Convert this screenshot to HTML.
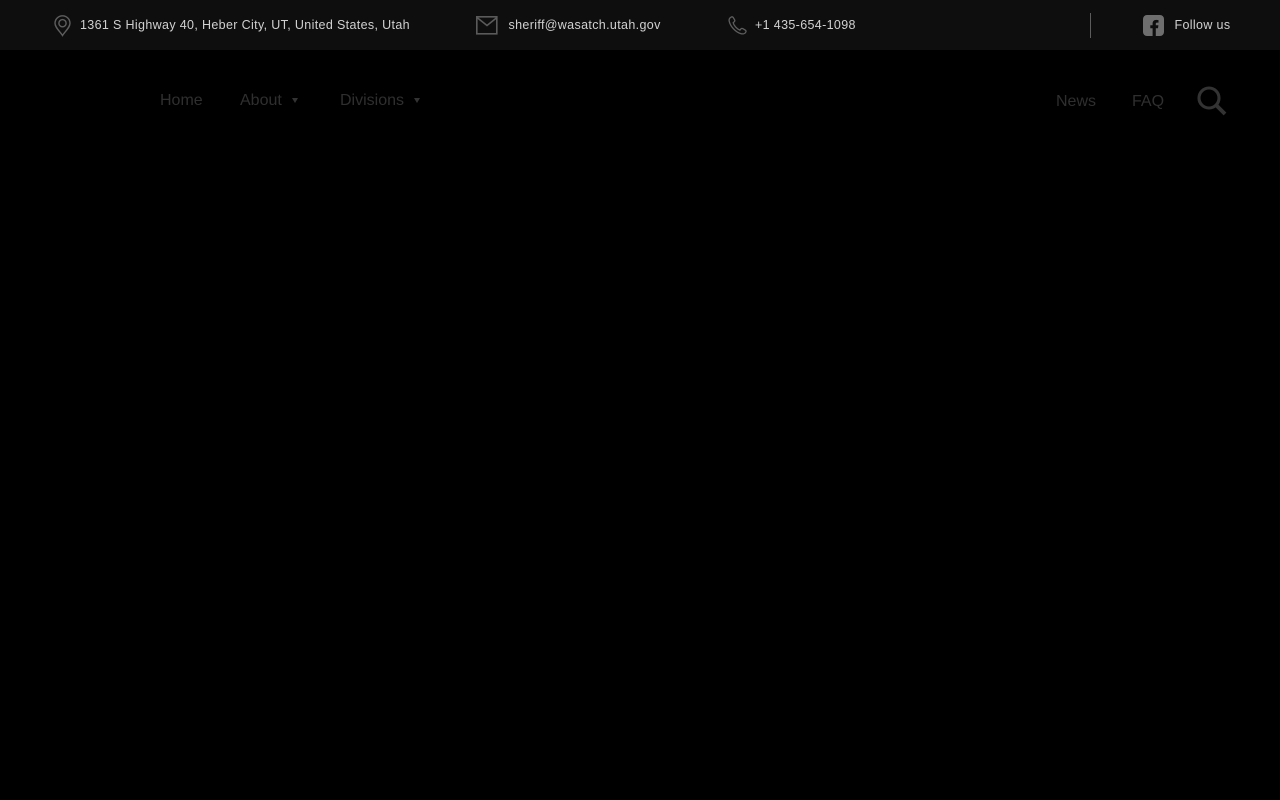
<!DOCTYPE html>
<html lang="en">
<head>
<meta charset="utf-8">
<title>Wasatch County Sheriff</title>
<style>
html,body{margin:0;padding:0;width:1280px;height:800px;background:#000;overflow:hidden;font-family:"Liberation Sans",sans-serif}
#top{position:absolute;left:0;top:0;width:1280px;height:50px;background:#0e0e0e}
.t{position:absolute;top:17px;font-size:12.5px;line-height:16px;color:#d0d0d0;letter-spacing:.35px;white-space:nowrap}
.n{position:absolute;font-size:16px;line-height:20px;color:#2f2f2f;white-space:nowrap;letter-spacing:0}
svg{position:absolute;overflow:visible}
.c{position:absolute;width:0;height:0;border-left:3.5px solid transparent;border-right:3.5px solid transparent;border-top:5px solid #333;top:98px}
</style>
</head>
<body>
<div id="top">
<svg style="left:54px;top:15px" width="17" height="22" viewBox="0 0 17 22" fill="none" stroke="#5e5e5e" stroke-width="1.4"><path d="M8.500 20.500C6 16.500 1 12.500 1 8.300A7.500 7.500 0 0 1 16 8.300C16 12.500 11 16.500 8.500 20.500Z"/><circle cx="8.500" cy="8.200" r="3.600"/></svg>
<div class="t" style="left:80px">1361 S Highway 40, Heber City, UT, United States, Utah</div>
<svg style="left:476px;top:16px" width="22" height="19" viewBox="0 0 22 19" fill="none" stroke="#5a5a5a" stroke-width="1.6"><rect x=".8" y=".8" width="20" height="17"/><path d="M1 1.500L11 9.500L21 1.500"/></svg>
<div class="t" style="left:508.500px">sheriff@wasatch.utah.gov</div>
<svg style="left:728px;top:16px" width="19" height="19" viewBox="0 0 19 19" fill="none" stroke="#5e5e5e" stroke-width="1.300"><path d="M3 1.200C1.500 2 .8 3.300 1.200 5.200C2.400 10.500 7.500 16 12.800 17.600C15 18.300 17.200 17.600 18 15.700C18.200 15 17.800 14.500 17.200 14.100L14.700 12.600C14 12.200 13.400 12.300 12.900 12.900L11.900 14.100C9 13.200 5.800 9.500 5.200 6.700L6.300 5.700C6.900 5.100 7 4.500 6.600 3.800L5.200 1.500C4.700 .8 3.800 .7 3 1.200Z"/></svg>
<div class="t" style="left:755px">+1 435-654-1098</div>
<div style="position:absolute;left:1090px;top:13px;width:1px;height:25px;background:#5c5c5c"></div>
<svg style="left:1143px;top:15px" width="21" height="21" viewBox="0 0 21 21"><path fill="#6e6e6e" d="M4 0H17A4 4 0 0 1 21 4V17A4 4 0 0 1 17 21H12.800V13.200H15L15.400 10.300H12.800V8.800C12.800 8 13.200 7.600 14 7.600H15.500V5.100C14.800 5 14.100 4.900 13.300 4.900C11 4.900 9.600 6.300 9.600 8.500V10.300H7.300V13.200H9.600V21H4A4 4 0 0 1 0 17V4A4 4 0 0 1 4 0Z"/></svg>
<div class="t" style="left:1174.500px">Follow us</div>
</div>
<div class="n" style="left:160px;top:91px">Home</div>
<div class="n" style="left:240px;top:91px">About</div>
<div class="c" style="left:291.500px"></div>
<div class="n" style="left:340px;top:91px">Divisions</div>
<div class="c" style="left:413.500px"></div>
<div class="n" style="left:1056px;top:92px">News</div>
<div class="n" style="left:1132px;top:92px">FAQ</div>
<svg style="left:1197px;top:86px" width="30" height="30" viewBox="0 0 30 30" fill="none" stroke="#333"><circle cx="12" cy="12" r="10" stroke-width="3.100"/><path d="M19 19L28 28" stroke-width="3.800"/></svg>
</body>
</html>
